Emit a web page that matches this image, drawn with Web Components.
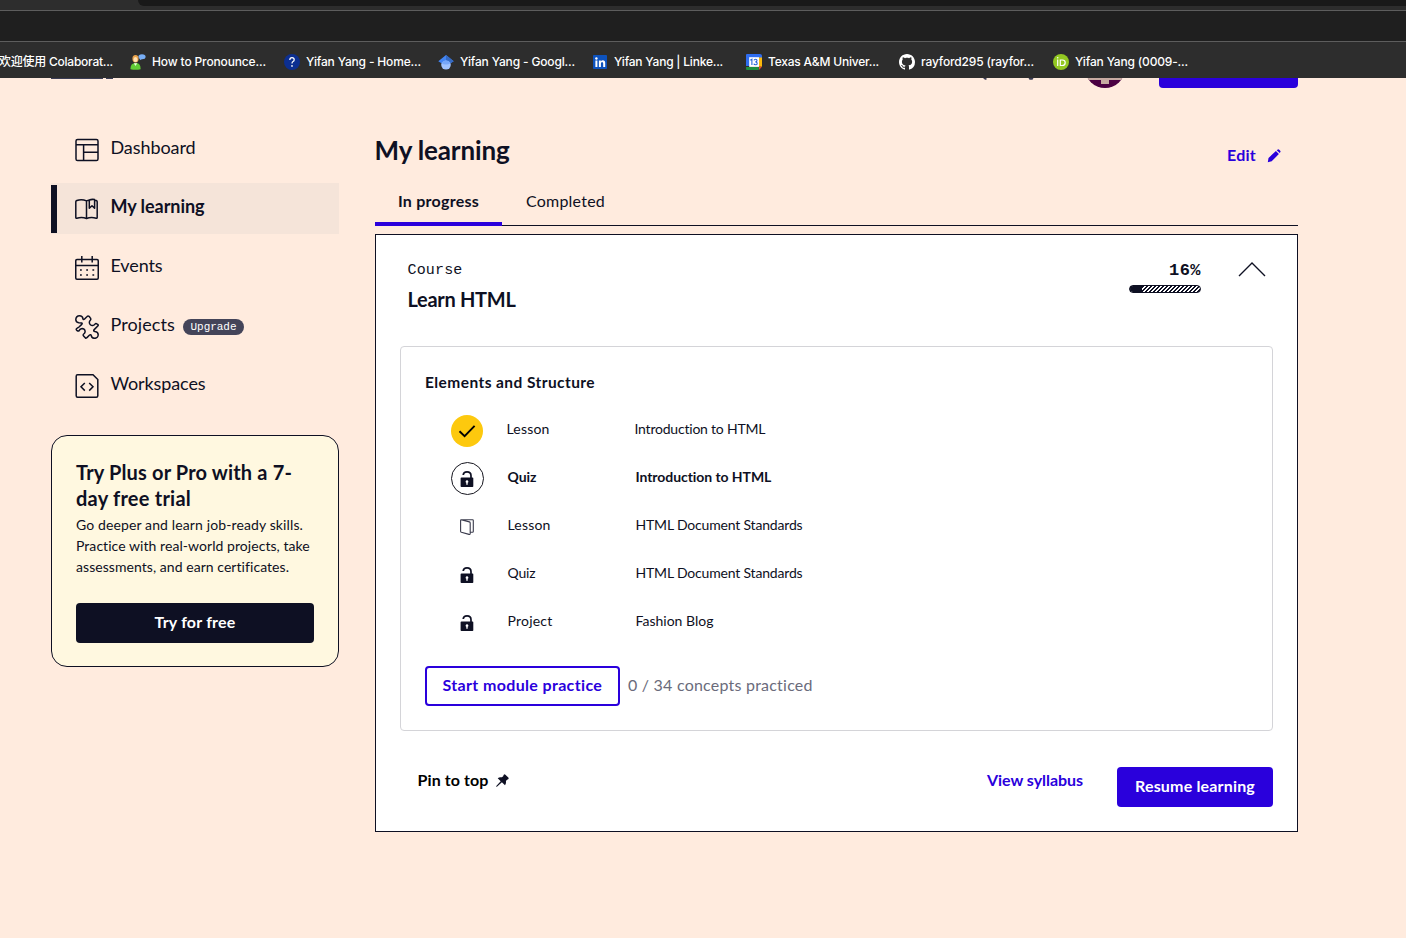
<!DOCTYPE html>
<html lang="en">
<head>
<meta charset="utf-8">
<title>My learning</title>
<style>
  html, body { margin: 0; height: 100%; overflow: hidden; }
  body {
    background: #ffebde; color: #0e1023;
    font-family: Lato, "Noto Sans CJK SC", sans-serif;
    --navy: #0e1023; --hyper: #2a00dc; --mono: "Liberation Mono", monospace;
  }
</style>
</head>
<body>
<learning-page></learning-page>

<script>
const define = (name, html, setup) => {
  const tpl = document.createElement('template');
  tpl.innerHTML = html;
  customElements.define(name, class extends HTMLElement {
    connectedCallback() {
      if (this.shadowRoot) return;
      this.attachShadow({ mode: 'open' }).appendChild(tpl.content.cloneNode(true));
      if (setup) setup(this, this.shadowRoot);
    }
  });
};

/* One line of text, tracked so that it fills the width given in "w". */
define('text-run', `
  <style>:host{display:inline-block;white-space:nowrap;text-align:left} span{display:inline-block}</style>
  <span><slot></slot></span>`,
  (el, root) => {
    const w = +el.getAttribute('w');
    if (!w) return;
    el.style.width = w + 'px';
    const span = root.querySelector('span');
    const n = el.textContent.length;
    span.style.letterSpacing = ((w - span.getBoundingClientRect().width) / n).toFixed(3) + 'px';
  });

const ICONS = {
  dashboard: `<svg width="24" height="24" viewBox="0 0 24 24" fill="none" stroke="currentColor" stroke-width="1.5"><rect x="1" y="1.5" width="22" height="21" rx="1.6"/><path d="M1 6.700h22M8.600 6.700v15.800M8.600 14.200H23"/></svg>`,
  book: `<svg width="24" height="24" viewBox="0 0 24 24" fill="none" stroke="currentColor" stroke-width="1.500" stroke-linejoin="round"><path d="M11.500 3.900C8.500 2.500 4.500 2.500 1.800 3.500Q.8 3.900.8 4.700V20.500Q.8 21.400 1.800 21.200C5 20.400 8.500 20.400 11.500 21.500C14.500 20.400 18 20.400 21.200 21.200Q22.200 21.400 22.200 20.500V4.700Q22.200 3.900 21.200 3.500L19.600 3.200M11.500 3.900V21.500M11.500 3.900L14.300 3M14.300 3V11.300L17 8.800L19.600 11.300V2.600Q17 2 14.300 3Z"/></svg>`,
  calendar: `<svg width="24" height="24" viewBox="0 0 24 24" fill="none" stroke="currentColor" stroke-width="1.500"><rect x=".75" y="3.500" width="22.500" height="19.700" rx="1.200"/><path d="M.8 9.500h22.500M6.800 0v6.500M17.200 0v6.500"/><path stroke-width="1.700" d="M5 14h1.800M11.200 14H13M17.400 14h1.800M5 19h1.800M11.200 19H13M17.400 19h1.800"/></svg>`,
  puzzle: `<svg width="24" height="24" viewBox="0 0 24 24" fill="none" stroke="currentColor" stroke-width="1.500" stroke-linejoin="round"><path d="M8 3.800C7.700 1.800 6.300.8 4.500.8C2.200.8.8 2.400.8 4.400C.8 6.200 2 7.400 3.800 7.700L6.700 8C7.500 8.300 7.200 9 6.500 9.600L4 12C2.800 13 1 13.400 1.200 14.400C1.400 15.600 3 16.400 4 15.800C5.200 13.800 7.300 13 9 14.200C10.800 15.700 10.200 18 8.700 19C7.800 19.700 8.100 20.500 8.800 21.200L10.300 22.800Q11.200 23.500 12 22.600L14.300 20.300C15.200 19.400 16.200 19.600 16.300 20.600C16.500 22.400 18 23.300 19.700 23.300C21.700 23.300 23.200 21.700 23.200 19.800C23.200 17.900 21.700 16.700 20 16.500C18.700 16.300 18.300 15.600 19.200 14.600L23 10.800Q23.500 10 22.700 9.500C21.700 8.700 20.800 8.200 20.200 8.900C18.900 10.900 16.700 10.900 15.400 9.800C14 8.600 14 6.400 15.300 5.200C16.200 4.300 15.800 3.400 15 2.500L14 1.300Q13 .5 12.100 1.500L9.600 4C8.800 4.800 8.100 4.700 8 3.800Z"/></svg>`,
  code: `<svg width="24" height="24" viewBox="0 0 24 24" fill="none" stroke="currentColor" stroke-width="1.500"><path d="M2.500.8H18L22.800 5.500V21.700Q22.800 23.200 21.300 23.200H2.600Q1.200 23.200 1.200 21.700V2.200Q1.200.8 2.500.8ZM9.800 9L6 12.800L9.800 16.600M14.200 9L18 12.800L14.200 16.600"/></svg>`,
  check: `<svg width="32" height="32" viewBox="0 0 32 32"><circle cx="16" cy="16" r="16" fill="#fdc90e"/><path d="M8.500 16.200L13.600 21.200L23.600 10.800" fill="none" stroke="#000" stroke-width="1.900"/></svg>`,
  lock: `<svg width="14" height="16" viewBox="0 0 14 16"><path d="M3.200 4C3.400 2 4.900.9 7 .9C9.400.9 11 2.400 11 4.700V7" fill="none" stroke="currentColor" stroke-width="1.700"/><path fill="currentColor" fill-rule="evenodd" d="M1.500 6.500H12.500Q13.300 6.500 13.300 7.300V15.200Q13.300 16 12.500 16H1.500Q.6 16 .6 15.200V7.300Q.6 6.500 1.500 6.500ZM7 9.200A1.400 1.400 0 0 0 6.300 11.800V13.700H7.700V11.800A1.400 1.400 0 0 0 7 9.200Z"/></svg>`,
  lesson: `<svg width="14" height="16" viewBox="0 0 14 16" fill="none" stroke="#3a3b4c" stroke-width="1.100" stroke-linejoin="round"><path d="M1 .8H12.600Q13.300.8 13.300 1.500V12.500Q13.300 13.200 12.500 13.200H10.300M1 .8Q.6.8.6 1.400V12.200Q.6 13 1.400 13.300L9 15.400Q10.200 15.700 10.200 14.500V4Q10.200 3.100 9.400 2.900Z"/></svg>`,
  pencil: `<svg width="14" height="14" viewBox="0 0 14 14" fill="currentColor"><path d="M1.500 9L8.900 2L11.900 5L4.700 12.200L.8 13.200ZM9.700 1.200L10.800.4Q11.500 0 12.200.7L13.200 1.700Q13.900 2.400 13.400 3.100L12.700 4.100Z"/></svg>`,
  pin: `<svg width="13" height="13" viewBox="0 0 13 13" fill="currentColor"><path d="M7.600.9Q8.500-.1 9.400.7L12.300 3.500Q13.100 4.400 12.200 5.200L11.100 5.700L9.900 7.100Q10.400 9.500 9 11.200L5.900 8.300L1.200 12.600L.1 13L.5 11.800L4.700 7.200L1.700 4.200Q3.500 2.700 5.900 3.300L7.200 2.200Z"/></svg>`,
  chevron: `<svg width="28" height="15" viewBox="0 0 28 15" fill="none" stroke="currentColor" stroke-width="1.400"><path d="M1 14L14 1L27 14"/></svg>`,
  speak: `<svg width="16" height="16" viewBox="0 0 16 16"><ellipse cx="12" cy="2.800" rx="3.600" ry="2.500" fill="#78aef5"/><path d="M10 4L9.800 6.300L12 5Z" fill="#78aef5"/><ellipse cx="5.500" cy="4.700" rx="3.100" ry="3.700" fill="#e8a24c"/><ellipse cx="5.500" cy="5.600" rx="2" ry="2.500" fill="#ffe2b4"/><path d="M.5 15.200Q.2 9.200 5.500 9T10.600 15.200Q5.500 16.500.5 15.200Z" fill="#62cc35"/><path d="M3.800 9.300L5.500 12L7.200 9.300Z" fill="#eaffdc"/></svg>`,
  help: `<svg width="16" height="16" viewBox="0 0 16 16"><circle cx="8" cy="8" r="8" fill="#0c2f91"/><path d="M5.800 5.900Q5.800 3.600 8 3.600T10.200 5.700Q10.200 6.900 9 7.600Q8 8.200 8 9.600" fill="none" stroke="#fff" stroke-width="1.200"/><circle cx="8" cy="11.900" r=".85" fill="#fff"/></svg>`,
  scholar: `<svg width="16" height="16" viewBox="0 0 16 16"><circle cx="8" cy="10.800" r="4.800" fill="#a0c3ff"/><path d="M8 1L.3 7.300L3.500 9.200Q5 6.400 8 6.400T12.500 9.200L15.700 7.300Z" fill="#4285f4"/><path d="M8 1V6.400Q11 6.400 12.500 9.200L15.700 7.300Z" fill="#356ac3"/><path d="M3.500 9Q5 6.300 8 6.300T12.500 9Q11 10.600 8 10.600T3.500 9Z" fill="#76a7fa"/></svg>`,
  linkedin: `<svg width="16" height="16" viewBox="0 0 16 16"><rect x="1" y="1" width="14" height="14" rx=".8" fill="#0d52bd"/><g fill="#fff"><circle cx="4.400" cy="4.500" r="1.200"/><path d="M3.400 6.500h2V13h-2ZM6.900 6.500h1.900v.9Q9.400 6.300 10.900 6.300Q13.200 6.300 13.200 9V13h-2V9.500Q11.200 8 10.100 8Q8.900 8 8.900 9.500V13h-2Z"/></g></svg>`,
  gcal: `<svg width="16" height="16" viewBox="0 0 16 16"><path d="M1 0H14Q16 0 16 2V12H0V1Q0 0 1 0Z" fill="#2f6df0"/><path d="M13 3.500H16V12.700H13Z" fill="#fbb90b"/><path d="M0 12.900H12.800V16H1Q0 16 0 15Z" fill="#1e8e3e"/><path d="M13 12.700H16L13 16Z" fill="#ea4335"/><path d="M3.200 3.200H13V12.900H3.200Z" fill="#fff"/><path d="M4.300 6.200L5.900 5.200V11M8 6.400Q8.300 5.300 9.500 5.300Q11 5.300 11 6.600Q11 7.800 9.400 7.900Q11.200 8 11.200 9.400Q11.200 10.800 9.600 10.800Q8.200 10.800 7.800 9.700" stroke="#2563d8" stroke-width="1.100" fill="none"/></svg>`,
  github: `<svg width="16" height="16" viewBox="0 0 16 16" fill="#fff"><path d="M8 0C3.580 0 0 3.580 0 8c0 3.540 2.290 6.530 5.470 7.590.4.070.55-.17.55-.38 0-.19-.01-.82-.01-1.490-2.010.37-2.530-.49-2.690-.94-.09-.23-.48-.94-.82-1.130-.28-.15-.68-.52-.01-.53.63-.01 1.080.58 1.230.82.720 1.210 1.870.87 2.330.66.070-.52.280-.87.510-1.070-1.780-.2-3.640-.89-3.640-3.950 0-.87.310-1.590.82-2.150-.08-.2-.36-1.020.08-2.120 0 0 .67-.21 2.200.82.640-.18 1.320-.27 2-.27s1.360.09 2 .27c1.530-1.040 2.200-.82 2.200-.82.440 1.100.16 1.920.08 2.120.51.560.82 1.270.82 2.150 0 3.070-1.870 3.750-3.650 3.950.29.250.54.730.54 1.480 0 1.070-.01 1.930-.01 2.200 0 .21.15.46.55.38A8.010 8.010 0 0 0 16 8c0-4.420-3.580-8-8-8z"/></svg>`,
  orcid: `<svg width="16" height="16" viewBox="0 0 16 16"><circle cx="8" cy="8" r="8" fill="#93c822"/><circle cx="4.700" cy="3.700" r=".8" fill="#fff"/><path d="M4.700 5.500V12M7.300 6H9.300Q12.200 6 12.200 8.700T9.300 11.500H7.300Z" fill="none" stroke="#fff" stroke-width="1.200"/></svg>`
};
define('ui-icon', `<style>:host{display:inline-flex;flex:none} svg{display:block}</style>`,
  (el, root) => root.append(document.createRange().createContextualFragment(ICONS[el.getAttribute('name')])));

/* Puts the icon named by the host's "icon" attribute in the shadow root's .icon box. */
const placeIcon = (el, root) => {
  const icon = document.createElement('ui-icon');
  icon.setAttribute('name', el.getAttribute('icon'));
  root.querySelector('.icon').append(icon);
};

/* ---------- browser chrome ---------- */
define('bookmark-item', `
  <style>
    :host{display:flex;flex:none;width:154px;align-items:center;gap:6px;color:#fff;font:500 12px/16px Inter,"Noto Sans CJK SC",sans-serif}
    :host([wide]){width:131px}
    :host([short]){width:153px}
  </style><slot></slot>`);
define('browser-chrome', `
  <style>
    :host{display:block;height:78px;background:#2d2d2d}
    .strip{height:6px;margin-left:138px;background:#191919;border-bottom-left-radius:6px}
    .bar{margin-top:4px;height:30px;background:#1f1f1f;border:solid #5d5d5d;border-width:1px 0}
    .marks{display:flex;height:36px;padding-top:4px;box-sizing:border-box;align-items:center;margin-left:-1px}
  </style>
  <div class="strip"></div><div class="bar"></div>
  <div class="marks">
    <bookmark-item wide><text-run w="114">欢迎使用 Colaborat...</text-run></bookmark-item>
    <bookmark-item><ui-icon name="speak"></ui-icon><text-run w="114">How to Pronounce...</text-run></bookmark-item>
    <bookmark-item><ui-icon name="help"></ui-icon><text-run w="115">Yifan Yang - Home...</text-run></bookmark-item>
    <bookmark-item><ui-icon name="scholar"></ui-icon><text-run w="115">Yifan Yang - Googl...</text-run></bookmark-item>
    <bookmark-item><ui-icon name="linkedin"></ui-icon><text-run w="109">Yifan Yang | Linke...</text-run></bookmark-item>
    <bookmark-item short><ui-icon name="gcal"></ui-icon><text-run w="111">Texas A&amp;M Univer...</text-run></bookmark-item>
    <bookmark-item><ui-icon name="github"></ui-icon><text-run w="113">rayford295 (rayfor...</text-run></bookmark-item>
    <bookmark-item><ui-icon name="orcid"></ui-icon><text-run w="113">Yifan Yang (0009-...</text-run></bookmark-item>
  </div>`);

/* The lower edge of the site header, scrolled under the browser chrome. */
define('site-header', `
  <style>
    :host{display:flex;height:10px;overflow:hidden;padding-left:51px}
    svg{display:block;flex:none}
    .logo{margin-right:870px}
    .avatar{margin:0 35px 0 51px}
    .cta{width:139px;height:10px;background:var(--hyper);border-radius:0 0 4px 4px}
  </style>
  <svg class="logo" width="62" height="10"><path d="M0 0h52v1H0ZM55 0h7v1h-7Z" fill="#3b3d55"/></svg>
  <svg width="52" height="10"><path d="M0 0h3.500v1.800H2ZM45.500 0h5l-1 1.700h-3Z" fill="#3b3d55"/></svg>
  <svg class="avatar" width="38" height="10" viewBox="0 0 38 10"><defs><clipPath id="c"><circle cx="19" cy="-10" r="20"/></clipPath></defs><g clip-path="url(#c)"><path d="M0 0h38v10H0Z" fill="#4b0042"/><path d="M2 0h34v2H23v4h-8V2H2Z" fill="#c7aaa1"/></g></svg>
  <div class="cta"></div>`);

/* ---------- sidebar ---------- */
define('nav-item', `
  <style>
    :host{display:flex;height:51px;align-items:center;padding-left:24px;font-size:18px;line-height:24px}
    .icon{display:flex;margin-right:11.500px;margin-top:1px}
    .label{display:flex;align-items:center;padding-bottom:5px;gap:8px}
    :host([active]){font-weight:700;background:linear-gradient(var(--navy),var(--navy)) 0 2px/6px 48px no-repeat #f5e4d9}
  </style>
  <div class="icon"></div><div class="label"><slot></slot></div>`, placeIcon);
define('tag-pill', `
  <style>:host{display:flex;align-items:center;justify-content:center;height:16px;width:61px;border-radius:8px;background:#444459;color:#fff;font:11px/16px var(--mono);margin-top:5px}</style><slot></slot>`);
define('trial-card', `
  <style>
    :host{display:block;box-sizing:border-box;width:288px;height:232px;margin-top:24px;padding:23px 24px;border:1px solid var(--navy);border-radius:16px;background:#fff8e0}
    h3{margin:0;font:700 20px/26px Lato,sans-serif}
    p{margin:3px 0 26px;font-size:14px;line-height:21px}
    h3 text-run,p text-run{display:block}
    button{display:block;width:238px;height:40px;padding:0 0 2px;border:0;border-radius:4px;background:var(--navy);color:#fff;font:700 16px/24px Lato,sans-serif}
  </style>
  <h3><text-run w="216">Try Plus or Pro with a 7-</text-run><text-run w="115">day free trial</text-run></h3>
  <p><text-run w="227">Go deeper and learn job-ready skills.</text-run><text-run w="234">Practice with real-world projects, take</text-run><text-run w="213">assessments, and earn certificates.</text-run></p>
  <button><text-run w="81">Try for free</text-run></button>`);
define('side-nav', `
  <style>:host{display:block;width:288px;padding-top:36px} nav{display:flex;flex-direction:column;gap:8px}</style>
  <nav>
    <nav-item icon="dashboard"><text-run w="85">Dashboard</text-run></nav-item>
    <nav-item icon="book" active><text-run w="94">My learning</text-run></nav-item>
    <nav-item icon="calendar"><text-run w="52">Events</text-run></nav-item>
    <nav-item icon="puzzle"><text-run w="64.500">Projects</text-run><tag-pill><text-run w="46">Upgrade</text-run></tag-pill></nav-item>
    <nav-item icon="code"><text-run w="95">Workspaces</text-run></nav-item>
  </nav>
  <trial-card></trial-card>`);

/* ---------- main column ---------- */
define('tab-bar', `
  <style>
    :host{display:flex;height:44px;font-size:16px;line-height:38px;background:linear-gradient(var(--navy),var(--navy)) 0 43px/100% 1px no-repeat}
    div{box-sizing:border-box;height:44px;padding:0 23px}
    .on{width:127px;border-bottom:4px solid var(--hyper);font-weight:700}
  </style>
  <div class="on"><text-run w="81">In progress</text-run></div>
  <div style="padding-left:24px"><text-run w="79">Completed</text-run></div>`);
define('progress-meter', `
  <style>
    :host{display:flex;flex-direction:column;align-items:flex-end;width:72px;font:700 17px/22px var(--mono)}
    .track{box-sizing:border-box;width:72px;height:8px;margin-top:3px;border:1px solid var(--navy);border-radius:4px;overflow:hidden;background:repeating-linear-gradient(135deg,var(--navy) 0 1.500px,#fff 1.500px 2.830px)}
    .fill{width:12px;height:6px;background:var(--navy)}
  </style>
  <text-run w="32">16%</text-run><div class="track"><div class="fill"></div></div>`);
define('module-row', `
  <style>
    :host{display:grid;grid-template-columns:33px 128px auto;height:48px;align-items:center;font-size:14px;line-height:20px}
    .icon{width:33px;height:33px;box-sizing:border-box;display:flex;align-items:center;justify-content:center;margin-top:4px;padding-right:2px}
    .text{margin-bottom:1px;padding-left:23.500px}
    :host([done]) .icon{justify-content:flex-start;padding:0}
    :host([done]) .text{padding-left:22.500px}
    :host([current]){font-weight:700}
    :host([current]) .icon{margin-top:2px;border:1px solid #16161f;border-radius:50%;padding:1px 1px 0 0}
  </style>
  <div class="icon"></div>
  <div class="text"><slot name="kind"></slot></div>
  <div class="text"><slot></slot></div>`, placeIcon);
define('module-panel', `
  <style>
    :host{display:block;box-sizing:border-box;height:385px;margin:0 24px;padding:23px 24px;border:1px solid #d4d4d8;border-radius:4px}
    h4{margin:0 0 11px;font:700 15.500px/24px Lato,sans-serif}
    .rows{padding-left:26px}
    .practice{display:flex;align-items:center;gap:8px;margin-top:21px;font-size:16px;color:#6a6b7b}
    .practice > text-run{margin-bottom:3px}
    button{box-sizing:border-box;width:195px;height:40px;padding:0 0 2px;border:2px solid var(--hyper);border-radius:4px;background:none;color:var(--hyper);font:700 16px/24px Lato,sans-serif}
  </style>
  <h4><text-run w="170">Elements and Structure</text-run></h4>
  <div class="rows">
    <module-row icon="check" done><text-run slot="kind" w="43">Lesson</text-run><text-run w="131">Introduction to HTML</text-run></module-row>
    <module-row icon="lock" current><text-run slot="kind" w="29">Quiz</text-run><text-run w="136">Introduction to HTML</text-run></module-row>
    <module-row icon="lesson"><text-run slot="kind" w="43">Lesson</text-run><text-run w="167">HTML Document Standards</text-run></module-row>
    <module-row icon="lock"><text-run slot="kind" w="28">Quiz</text-run><text-run w="167">HTML Document Standards</text-run></module-row>
    <module-row icon="lock"><text-run slot="kind" w="45">Project</text-run><text-run w="78">Fashion Blog</text-run></module-row>
  </div>
  <div class="practice"><button><text-run w="160">Start module practice</text-run></button><text-run w="185">0 / 34 concepts practiced</text-run></div>`);
define('course-card', `
  <style>
    :host{display:block;box-sizing:border-box;height:598px;margin-top:8px;border:1px solid var(--navy);background:#fff}
    header{display:flex;height:111px;padding:24px 31px 0 31.500px;box-sizing:border-box}
    .titles{flex:1}
    .kind{font:15px/24px var(--mono);display:block}
    h2{margin:2px 0 0;font:700 20px/28px Lato,sans-serif}
    progress-meter{margin:1px 37px 0 0}
    .chev{margin-top:3px}
    footer{display:flex;align-items:flex-start;padding:36px 24px 0 41.500px;font-weight:700;font-size:16px;line-height:26px}
    .pin{display:flex;align-items:center;gap:7.500px;flex:1;color:#000}
    .pin ui-icon{color:var(--navy);margin-top:1px}
    .link{color:var(--hyper);margin-right:34px}
    button{width:156px;height:40px;padding:0 0 2px;border:0;border-radius:4px;background:var(--hyper);color:#fff;font:700 16px/24px Lato,sans-serif}
  </style>
  <header>
    <div class="titles"><text-run class="kind" w="55">Course</text-run><h2><text-run w="108">Learn HTML</text-run></h2></div>
    <progress-meter></progress-meter>
    <ui-icon class="chev" name="chevron"></ui-icon>
  </header>
  <module-panel></module-panel>
  <footer>
    <div class="pin"><text-run w="71">Pin to top</text-run><ui-icon name="pin"></ui-icon></div>
    <text-run class="link" w="96">View syllabus</text-run>
    <button><text-run w="120">Resume learning</text-run></button>
  </footer>`);
define('learning-main', `
  <style>
    :host{display:block;width:923px}
    .head{display:flex;height:94px;justify-content:space-between;padding:46px 17px 0 0;box-sizing:border-box}
    h1{margin:0 0 0 -.500px;font:700 26px/32px Lato,sans-serif}
    .edit{display:flex;align-items:center;gap:11px;height:24px;margin-top:10px;font-weight:700;font-size:16px;line-height:24px;color:var(--hyper)}
    .edit text-run{margin-bottom:2px}
  </style>
  <div class="head"><h1><text-run w="135">My learning</text-run></h1><div class="edit"><text-run w="29">Edit</text-run><ui-icon name="pencil"></ui-icon></div></div>
  <tab-bar></tab-bar>
  <course-card></course-card>`);
define('learning-page', `
  <style>:host{display:block;width:1406px;height:938px;overflow:hidden} .cols{display:flex;gap:36px;padding-left:51px}</style>
  <browser-chrome></browser-chrome>
  <site-header></site-header>
  <div class="cols"><side-nav></side-nav><learning-main></learning-main></div>`);
</script>
</body>
</html>
